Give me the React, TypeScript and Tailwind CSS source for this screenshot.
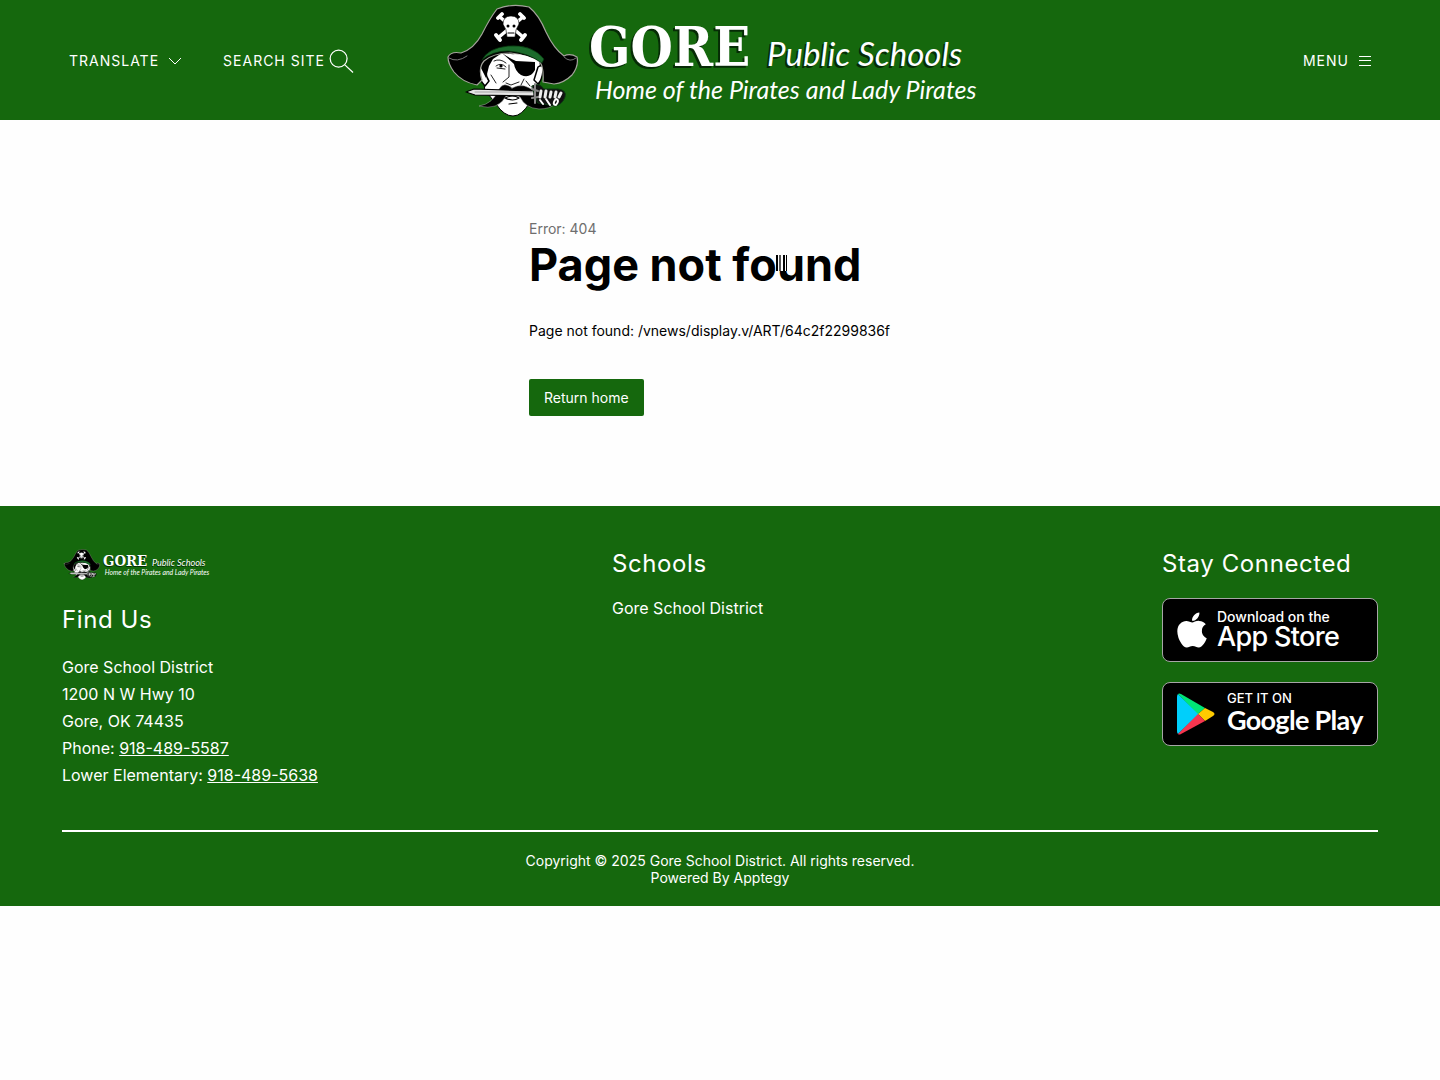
import React from 'react';
import { FaApple } from 'react-icons/fa';

const addressLines = ['Gore School District', '1200 N W Hwy 10', 'Gore, OK 74435'];

const phones = [
  { label: 'Phone', number: '918-489-5587' },
  { label: 'Lower Elementary', number: '918-489-5638' },
];

function Pirate() {
  return (
    <g strokeLinejoin="round" strokeLinecap="round">
      {/* face */}
      <path d="M42 62 Q44 52 54 52 L98 56 Q103 68 99 84 L90 102 Q82 116 73 116 Q64 116 56 104 L45 90 Z" fill="#fff" stroke="#000" strokeWidth="1" />
      <path d="M40 65 q-4 12 5 21 l4 -5 q-4 -6 -3 -14 z M98 67 q6 -4 5 4 q-1 9 -5 13 l-4 -4 z" fill="#fff" stroke="#000" strokeWidth="1.5" />
      <path d="M41 68 L39 56 L62 53 L53 59 L49 66 L46 78 Z" fill="#000" />
      {/* hat */}
      <path
        d="M8 57 Q11 51 21 53 Q34 49 42 34 Q50 18 57 9 Q72 3 89 7 Q99 15 106 32 Q114 49 124 56 Q130 53 137 57 Q139 66 132 75 Q124 83 114 84 L103 82 Q104 68 100 62 Q86 55 71 53 Q53 53 44 61 Q38 68 42 80 L37 85 Q22 82 14 72 Q8 64 8 57 Z"
        fill="#000"
        stroke="#a3a39b"
        strokeWidth="1.2"
      />
      <path d="M9 58 Q17 63 27 56 M124 57 Q130 63 136 58" fill="none" stroke="#777" strokeWidth="1" />
      <path d="M42 60 Q48 48 68 46 Q92 44 104 59 L102 63 Q86 52 68 51 Q52 51 42 60 Z" fill="#1c6b2c" stroke="#052f0a" strokeWidth="0.7" />
      {/* skull and crossbones */}
      <path d="M60 17 L83 37 M83 17 L59 37" stroke="#fff" strokeWidth="3.4" />
      <path d="M58 18 l4 -4 M80 14 l4 4 M56 35 l4 5 M81 40 l4 -5" stroke="#fff" strokeWidth="3.8" />
      <path d="M63 24 Q63 16 71 16 Q79 16 79 24 L76 30 L75 37 L67 37 L66 30 Z" fill="#fff" stroke="#000" strokeWidth="0.6" />
      <circle cx="68" cy="26" r="1.5" />
      <circle cx="74" cy="26" r="1.5" />
      <path d="M68 33 h6" stroke="#000" strokeWidth="1.2" />
      {/* eye patch */}
      <path d="M62 53 Q69 58 76 61 L95 62 L95 70 Q90 79 81 75 Q75 71 74 64 Z" fill="#000" />
      <path d="M73 54 Q88 54 99 62 L84 60 Z" fill="#fff" />
      {/* eye, nose and cheeks */}
      <path d="M54 61 q6 -3 12 2 M56 66 q5 -4 10 1 M57 68 l8 1 M69 65 l0 12 l-6 5 M66 83 l5 2 l8 -3 M51 75 l5 8 M84 79 l-3 6 M86 81 l4 5" fill="none" stroke="#222" strokeWidth="1" />
      <circle cx="61" cy="66" r="1.6" />
      {/* moustache */}
      <path d="M72 88 Q64 81 59 89 Q53 104 39 106 Q58 111 66 96 L72 91 L80 97 Q85 108 99 109 Q110 109 115 104 Q103 105 96 93 Q84 81 72 88 Z" fill="#000" stroke="#aaa" strokeWidth="0.5" />
      <path d="M65 98 q8 -4 14 0 q-6 4 -14 0 M69 104 l8 -1" fill="#fff" stroke="#000" strokeWidth="1.2" />
      {/* sword */}
      <path d="M26 92 L34 89 L94 91 L94 96 L35 95 Z" fill="#e5e5e5" stroke="#000" strokeWidth="1.2" />
      <path d="M35 92 H93" stroke="#888" strokeWidth="0.7" />
      <path d="M92 86 q7 -4 12 3 l14 0 q9 1 7 8 q-3 8 -10 9 l-17 -3 z" fill="#111" stroke="#0b3812" />
      <path d="M95 84 v19 M92 89 l6 2 M92 98 l6 -1" stroke="#888" strokeWidth="2" />
      <path d="M101 91 l-1 6 M106 91 l-1 6 M111 92 l-1 5 M116 92 l-1 5 M121 93 l-2 4" stroke="#eee" strokeWidth="3" />
      <path d="M100 100 l3 4 M106 99 l4 6 M116 99 q4 1 0 6 q-4 0 -1 -5" fill="none" stroke="#fff" strokeWidth="2" />
    </g>
  );
}

function Logo({ className }: { className: string }) {
  return (
    <svg viewBox="0 0 560 120" className={className} role="img" aria-label="Gore Public Schools">
      <Pirate />
      <g fontFamily="'DejaVu Serif Condensed', 'DejaVu Serif', serif" fontWeight="700" fontSize="54">
        <text x="147" y="68" fill="#062b06" aria-hidden="true">GORE</text>
        <text x="149" y="66" fill="#fff">GORE</text>
      </g>
      <g fontFamily="Lato, sans-serif" fontStyle="italic">
        <text x="325" y="68" fill="#062b06" fontSize="33" aria-hidden="true">Public Schools</text>
        <text x="327" y="66" fill="#fff" fontSize="33">Public Schools</text>
        <text x="155" y="99" fill="#fff" fontSize="25">Home of the Pirates and Lady Pirates</text>
      </g>
    </svg>
  );
}

function Header() {
  return (
    <header className="grid h-[120px] grid-cols-[1fr_auto_1fr] items-center bg-[#15680d] px-[69px] text-sm text-white">
      <div className="flex items-center gap-10 pt-0.5">
        <button className="flex items-center gap-2 tracking-[1px]">
          TRANSLATE
          <svg viewBox="0 0 16 16" className="h-4 w-4" fill="none" stroke="currentColor" aria-hidden="true">
            <path d="M2 5 L8 11 L14 5" />
          </svg>
        </button>
        <button className="flex items-center gap-1 tracking-[1px]">
          SEARCH SITE
          <svg viewBox="0 0 26 26" className="h-[25px] w-[25px]" fill="none" stroke="currentColor" strokeWidth="1.3" aria-hidden="true">
            <circle cx="10" cy="10" r="8.8" />
            <path d="M16.5 16.5 L25 24.5" />
          </svg>
        </button>
      </div>
      <a href="#home">
        <Logo className="h-[120px] w-[560px]" />
      </a>
      <button className="flex items-center gap-2.5 justify-self-end pt-0.5 tracking-[1px]">
        MENU
        <svg viewBox="0 0 12 12" className="h-3 w-3" stroke="currentColor" aria-hidden="true">
          <path d="M0 1.5 H12 M0 5.5 H12 M0 10.5 H12" />
        </svg>
      </button>
    </header>
  );
}

// Small three-bar loading indicator drawn on top of the title
function Loader() {
  return (
    <svg viewBox="0 0 12 16" className="absolute top-[18px] left-[247px] h-4 w-3" aria-hidden="true">
      <rect width="12" height="16" fill="#fefefe" />
      <rect width="2" height="16" fill="#000" />
      <rect x="3" width="2" height="16" fill="#555" />
      <rect x="7" width="2" height="16" fill="#000" />
      <rect x="10" width="1" height="16" fill="#000" />
    </svg>
  );
}

function AppStoreBadge() {
  return (
    <a href="#app-store" className="flex h-16 w-[216px] items-center rounded-lg border border-[#a6a6a6] bg-black pl-3.5 text-white">
      <FaApple className="h-10 w-[30px]" />
      <span className="ml-2.5 flex flex-col pb-0.5">
        <span className="text-sm leading-4 font-medium">Download on the</span>
        <span className="text-[27px] leading-6 font-medium tracking-tight">App Store</span>
      </span>
    </a>
  );
}

function GooglePlayBadge() {
  return (
    <a href="#google-play" className="flex h-16 w-[216px] items-center rounded-lg border border-[#a6a6a6] bg-black pl-3.5 text-white">
      <svg viewBox="0 0 38 42" className="h-[42px] w-[38px]" aria-hidden="true">
        <path d="M1 1 L22 21 L1 41 Q0 40 0 38 V4 Q0 2 1 1 Z" fill="#00cffb" />
        <path d="M1 1 Q2 0 4 1 L28 15 L21 21 Z" fill="#00e676" />
        <path d="M28 15 L36 19 Q39 21 36 23 L28 28 L21 21 Z" fill="#ffcb00" />
        <path d="M21 21 L28 28 L4 41 Q2 42 1 41 Z" fill="#f5364f" />
      </svg>
      <span className="ml-3 flex flex-col pb-1">
        <span className="text-[13px] leading-4 font-medium">GET IT ON</span>
        <span className="font-[Lato,sans-serif] text-[27px] leading-7 font-bold tracking-tight">Google Play</span>
      </span>
    </a>
  );
}

function Footer() {
  return (
    <footer className="bg-[#15680d] px-[62px] pt-[42px] text-white">
      <div className="flex justify-between">
        <div className="w-[334px]">
          <Logo className="h-[33px] w-[154px]" />
          <h2 className="mt-[23px] text-2xl leading-8 tracking-wide">Find Us</h2>
          <div className="mt-[18px] leading-[27px]">
            {addressLines.map((line) => (
              <p key={line}>{line}</p>
            ))}
            {phones.map((phone) => (
              <p key={phone.number}>
                {phone.label}:{' '}
                <a href={`tel:${phone.number}`} className="underline">
                  {phone.number}
                </a>
              </p>
            ))}
          </div>
        </div>
        <div className="w-[334px]">
          <h2 className="text-2xl leading-8 tracking-wide">Schools</h2>
          <a href="#district" className="mt-4 block">Gore School District</a>
        </div>
        <div className="w-[216px]">
          <h2 className="text-2xl leading-8 tracking-wide">Stay Connected</h2>
          <div className="mt-[18px] flex flex-col gap-5">
            <AppStoreBadge />
            <GooglePlayBadge />
          </div>
        </div>
      </div>
      <div className="mt-[41px] border-t-2 border-white pt-5 pb-5 text-center text-sm leading-[17px]">
        <p>Copyright © 2025 Gore School District. All rights reserved.</p>
        <p>
          Powered By <a href="#apptegy">Apptegy</a>
        </p>
      </div>
    </footer>
  );
}

export default function App() {
  return (
    <div className="min-h-screen bg-[#fefefe] font-[Inter,sans-serif]">
      <Header />
      <main className="flex justify-center pt-[100px] pb-[90px] text-sm text-black">
        <div className="w-[382px]">
          <p className="leading-[17px] text-[#6e6e6e]">Error: 404</p>
          <h1 className="relative text-[45px] leading-14 font-bold">
            Page not found
            <Loader />
          </h1>
          <p className="mt-7 leading-5">Page not found: /vnews/display.v/ART/64c2f2299836f</p>
          <a href="#home" className="mt-[38px] inline-block rounded-xs bg-[#15680d] px-[15px] py-2.5 leading-[17px] text-white">
            Return home
          </a>
        </div>
      </main>
      <Footer />
    </div>
  );
}
